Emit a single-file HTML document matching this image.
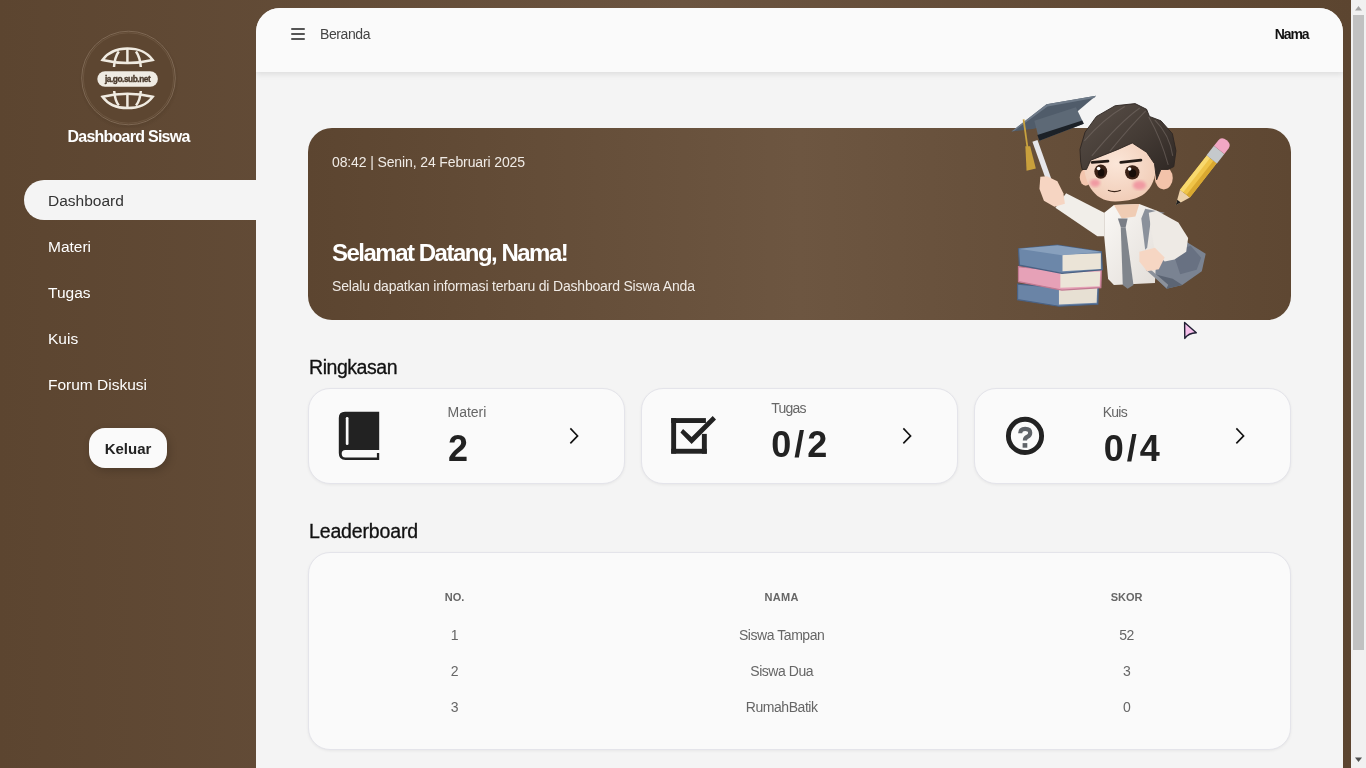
<!DOCTYPE html>
<html><head><meta charset="utf-8">
<style>
*{margin:0;padding:0;box-sizing:border-box}
html,body{width:1366px;height:768px;overflow:hidden}
body{position:relative;font-family:"Liberation Sans",sans-serif;background:linear-gradient(90deg,#5c4530 0%,#6b5440 50%,#5c4530 99%);}
.a{position:absolute;white-space:nowrap;line-height:1}
#sb{position:absolute;left:0;top:0;width:256px;height:768px}
#main{position:absolute;left:256px;top:8px;width:1087px;height:760px;background:#f4f4f4;border-radius:24px 24px 0 0;overflow:hidden}
#hdr{position:absolute;left:0;top:0;width:1087px;height:64px;background:#fafafa;box-shadow:0 2px 6px rgba(0,0,0,.10)}
#scroll{position:absolute;left:1351px;top:0;width:15px;height:768px;background:#f1f1f1}
.th{top:583.7px;width:200px;text-align:center;font-size:11px;font-weight:bold;color:#666}
.td{width:200px;text-align:center;font-size:14px;color:#666;letter-spacing:-0.45px}
.card{position:absolute;background:#fafafa;border:1px solid #e4e4ea;border-radius:22px;box-shadow:0 1px 3px rgba(0,0,0,.06)}
</style></head>
<body>
<div id="wrap" style="position:absolute;left:0;top:0;width:1366px;height:768px;will-change:transform">
<div id="sb">
  <svg class="a" style="left:78px;top:28px" width="100" height="100" viewBox="78 28 100 100">
    <defs><radialGradient id="lg" cx="50%" cy="50%" r="50%"><stop offset="85%" stop-color="#3a2a1a" stop-opacity=".25"/><stop offset="100%" stop-color="#3a2a1a" stop-opacity="0"/></radialGradient></defs>
    <circle cx="129" cy="80" r="50" fill="url(#lg)"/>
    <circle cx="128.5" cy="78" r="46.5" fill="#5d4631"/>
    <circle cx="128.5" cy="78" r="46.8" fill="none" stroke="#8e7864" stroke-width=".7"/>
    <circle cx="128.5" cy="78" r="45.2" fill="none" stroke="#7c6651" stroke-width=".5"/>
    <g fill="none" stroke="#f0ebe1" stroke-width="2.5" stroke-linecap="butt">
      <path d="M102.5,60 C109,51 117,48.6 127.4,48.6 C138,48.6 146,51 152.7,60 Q127.4,66 102.5,60 Z" stroke-linejoin="miter"/>
      <path d="M127.4,49 V63.2"/>
      <path d="M118.8,51.5 Q114.8,57 114,67"/>
      <path d="M136,51.5 Q140,57 140.8,67"/>
      <path d="M102.5,96.7 C109,105.7 117,108.1 127.4,108.1 C138,108.1 146,105.7 152.7,96.7 Q127.4,90.7 102.5,96.7 Z" stroke-linejoin="miter"/>
      <path d="M127.4,93.5 V107.8"/>
      <path d="M114.2,91 Q115,101 118.8,105.5"/>
      <path d="M140.8,91 Q140,101 136,105.5"/>
    </g>
    <rect x="97.3" y="71.3" width="60.6" height="15.5" rx="7.75" fill="#efebe3"/>
    <text x="127.6" y="82.2" text-anchor="middle" font-family="Liberation Sans" font-weight="bold" font-size="8.3" letter-spacing="-0.45" fill="#4a3a2c" stroke="#4a3a2c" stroke-width="0.35">ja.go.sub.net</text>
  </svg>
  <div class="a" id="title" style="left:0;width:256px;text-align:center;top:129px;font-size:16px;font-weight:bold;color:#fff;letter-spacing:-0.75px;padding-left:1px">Dashboard Siswa</div>
  <div class="a" style="left:24px;top:180px;width:232px;height:40px;background:#f4f4f4;border-radius:20px 0 0 20px"></div>
  <div class="a" style="left:48px;top:192.7px;font-size:15.5px;color:#333">Dashboard</div>
  <div class="a" style="left:48px;top:238.7px;font-size:15.5px;color:#fff">Materi</div>
  <div class="a" style="left:48px;top:284.7px;font-size:15.5px;color:#fff">Tugas</div>
  <div class="a" style="left:48px;top:330.7px;font-size:15.5px;color:#fff">Kuis</div>
  <div class="a" style="left:48px;top:376.7px;font-size:15.5px;color:#fff">Forum Diskusi</div>
  <div class="a" style="left:89px;top:428px;width:78px;height:40px;background:#fafafa;border-radius:16px;box-shadow:2px 3px 8px rgba(0,0,0,.18)"></div>
  <div class="a" style="left:89px;top:441px;width:78px;text-align:center;font-size:15px;font-weight:bold;color:#222">Keluar</div>
</div>

<div id="main">
  <div id="hdr">
    <div class="a" style="left:35px;top:20px;width:14px;height:2px;background:#555;border-radius:1px"></div>
    <div class="a" style="left:35px;top:25px;width:14px;height:2px;background:#555;border-radius:1px"></div>
    <div class="a" style="left:35px;top:30px;width:14px;height:2px;background:#555;border-radius:1px"></div>
    <div class="a" style="left:64px;top:19px;font-size:14px;color:#444;letter-spacing:-0.4px">Beranda</div>
    <div class="a" style="right:33.5px;top:19px;font-size:14px;font-weight:bold;color:#111;letter-spacing:-1.1px;padding-right:1px">Nama</div>
  </div>

  <div class="a" id="banner" style="left:52px;top:120px;width:983px;height:192px;border-radius:24px;background:linear-gradient(90deg,#5c4530 0%,#6d5641 50%,#5e4732 100%)"></div>
  <div class="a" style="left:76px;top:147.2px;font-size:14px;color:#f0ebe6;letter-spacing:-0.12px">08:42 | Senin, 24 Februari 2025</div>
  <div class="a" style="left:76px;top:233px;font-size:24px;font-weight:bold;color:#fff;letter-spacing:-1.5px">Selamat Datang, Nama!</div>
  <div class="a" style="left:76px;top:271.1px;font-size:14px;color:#f0ebe6;letter-spacing:-0.19px">Selalu dapatkan informasi terbaru di Dashboard Siswa Anda</div>

  <div class="a" style="left:53px;top:350.1px;font-size:19.5px;color:#111;letter-spacing:-0.45px;-webkit-text-stroke:0.3px #111">Ringkasan</div>

  <div class="card" style="left:52px;top:380px;width:317px;height:96px"></div>
  <div class="card" style="left:385px;top:380px;width:317px;height:96px"></div>
  <div class="card" style="left:718px;top:380px;width:317px;height:96px"></div>

  <div class="a" style="left:191.5px;top:397.1px;font-size:14px;color:#666">Materi</div>
  <div class="a" style="left:192px;top:423.2px;font-size:36px;font-weight:bold;color:#222">2</div>
  <div class="a" style="left:515.3px;top:392.9px;font-size:14px;color:#666;letter-spacing:-0.8px">Tugas</div>
  <div class="a" style="left:515.3px;top:419px;font-size:36px;font-weight:bold;color:#222;letter-spacing:3px">0/2</div>
  <div class="a" style="left:846.7px;top:396.8px;font-size:14px;color:#666;letter-spacing:-0.75px">Kuis</div>
  <div class="a" style="left:847.7px;top:423.2px;font-size:36px;font-weight:bold;color:#222;letter-spacing:3px">0/4</div>

  <div class="a" style="left:53px;top:513.5px;font-size:19.5px;color:#111;letter-spacing:-0.15px;-webkit-text-stroke:0.3px #111">Leaderboard</div>
  <div class="card" style="left:52px;top:543.5px;width:983px;height:198px"></div>

  <div class="a th" style="left:98.5px">NO.</div>
  <div class="a th" style="left:425.7px;letter-spacing:0.3px">NAMA</div>
  <div class="a th" style="left:770.6px">SKOR</div>
  <div class="a td" style="left:98.5px;top:620.35px">1</div>
  <div class="a td" style="left:425.7px;top:620.35px">Siswa Tampan</div>
  <div class="a td" style="left:770.6px;top:620.35px">52</div>
  <div class="a td" style="left:98.5px;top:656.15px">2</div>
  <div class="a td" style="left:425.7px;top:656.15px">Siswa Dua</div>
  <div class="a td" style="left:770.6px;top:656.15px">3</div>
  <div class="a td" style="left:98.5px;top:692.15px">3</div>
  <div class="a td" style="left:425.7px;top:692.15px">RumahBatik</div>
  <div class="a td" style="left:770.6px;top:692.15px">0</div>
</div>


<svg class="a" style="left:0;top:0" width="1366" height="768" viewBox="0 0 1366 768">

  <!-- illustration -->
  <defs>
    <linearGradient id="hairg" x1="0" y1="0" x2="1" y2="1"><stop offset="0" stop-color="#5a5049"/><stop offset=".55" stop-color="#433a34"/><stop offset="1" stop-color="#2c2522"/></linearGradient>
    <linearGradient id="shirtg" x1="0" y1="0" x2="1" y2="1"><stop offset="0" stop-color="#faf8f5"/><stop offset="1" stop-color="#e2ddd8"/></linearGradient>
    <radialGradient id="faceg" cx="45%" cy="40%" r="60%"><stop offset="0" stop-color="#fbe6d8"/><stop offset="1" stop-color="#f1cdb8"/></radialGradient>
    <filter id="blur2"><feGaussianBlur stdDeviation="6"/></filter>
  </defs>
  <g transform="translate(1005,90) scale(0.29948)">
    <!-- cap -->
    <polygon points="21.5,138.7 138.7,47.8 303.8,19.1 241.6,71.8 98,129" fill="#505c6a"/>
    <polygon points="21.5,138.7 138.7,47.8 303.8,19.1 298,27 142,55 30,137" fill="#6f7b89"/>
    <polygon points="98,102.9 236.8,57.4 263,112.4 114.8,169.8" fill="#5d6976"/>
    <polygon points="108,150 258,102 263,112.4 114.8,169.8" fill="#1c2127"/>
    <path d="M62,98 L75,192" stroke="#c9a23f" stroke-width="6" fill="none"/>
    <polygon points="68,188 84,188 103,262 72,270" fill="#c9a03c"/>
    <!-- books -->
    <polygon points="42,648 185,660 312,655 310,715 180,722 42,700" fill="#6a84a6" stroke="#4a6284" stroke-width="4"/>
    <polygon points="180,665 308,660 306,710 180,716" fill="#e7e0d3"/>
    <polygon points="45,590 190,605 322,600 320,660 190,668 45,640" fill="#e6a1b7" stroke="#c27a92" stroke-width="4"/>
    <polygon points="185,610 318,606 316,655 185,660" fill="#ece5d8"/>
    <polygon points="45,530 175,518 322,540 325,600 190,612 48,585" fill="#6c87a9" stroke="#4a6284" stroke-width="4"/>
    <polygon points="192,550 320,545 320,598 192,605" fill="#ebe4d7"/>
    <path d="M45,530 L175,518 L322,540 L190,552 Z" fill="#88a0bd"/>
    <!-- bag -->
    <polygon points="500.7,507.5 585.5,494.5 670.2,546.6 657.2,605.3 592,650.9 539.8,664 487.7,611.8" fill="#7a8392"/>
    <polygon points="560,540 620,520 655,560 640,600 585,615" fill="#687182"/>
    <polygon points="487.7,611.8 539.8,664 592,650.9 560,630 520,620" fill="#5c6574"/>
    <!-- torso -->
    <polygon points="331.2,409.7 363.8,383.6 448.6,380.4 507.2,403.2 520,480 505,560 500.7,644.4 363.8,650.9 344.3,631.4 331.2,488" fill="url(#shirtg)"/>
    <!-- raised arm sleeve -->
    <polygon points="168.2,393.4 204.1,344.5 331.2,409.7 331.2,488 308.4,488" fill="#f1eee9"/>
    <!-- neck -->
    <polygon points="363.8,383.6 448.6,380.4 435.5,422.8 389.9,429.3" fill="#f0ccb4"/>
    <!-- strap -->
    <polygon points="468.1,396.7 533.3,409.7 487.7,429.3 474.6,527.1 468.1,533.6 455.1,429.3" fill="#8b919b"/>
    <polygon points="470,600 482,596 545,650 539.8,662" fill="#8b919b"/>
    <!-- tie -->
    <polygon points="376.9,429.3 409.5,429.3 402.9,458.6 386.6,458.6" fill="#7a7e86"/>
    <polygon points="386.6,458.6 402.9,458.6 429,650.9 409.5,664 393.2,650.9" fill="#80858c"/>
    <!-- right arm -->
    <polygon points="480,410 507.2,403.2 578.9,442.3 611.5,494.5 605,540.1 565.9,566.2 533.3,572.7 500.7,540.1 490,480" fill="#eeeae5"/>
    <!-- hands -->
    <polygon points="448.6,540.1 500.7,527.1 533.3,559.7 513.7,598.8 474.6,605.3 448.6,572.7" fill="#f6d6c3"/>
    <path d="M100,170 L172,372" stroke="#e6e6ea" stroke-width="18" fill="none"/>
    <polygon points="118,290 140,288 175,305 195,345 200,380 165,390 130,370 115,330" fill="#f6d5c2"/>
    <!-- ears -->
    <ellipse cx="269.6" cy="291.7" rx="20" ry="28" fill="#f3c6ae"/>
    <ellipse cx="530.2" cy="294" rx="30" ry="38" fill="#f3c3aa"/>
    <!-- face -->
    <path d="M262,230 C262,300 290,372 368,372 C455,372 500,340 506,250 L500,190 L420,160 L320,190 Z" fill="url(#faceg)"/>
    <ellipse cx="300.7" cy="310.8" rx="17" ry="13" fill="#f09aa2" filter="url(#blur2)"/>
    <ellipse cx="448.9" cy="318" rx="22" ry="15" fill="#f09aa2" filter="url(#blur2)"/>
    <ellipse cx="319.8" cy="272.5" rx="21.5" ry="24" fill="#3b2216"/>
    <ellipse cx="425" cy="274.9" rx="24" ry="24" fill="#3b2216"/>
    <ellipse cx="321" cy="276" rx="11" ry="13" fill="#160d08"/>
    <ellipse cx="426" cy="278" rx="12" ry="13" fill="#160d08"/>
    <circle cx="312.6" cy="262" r="6" fill="#fff"/>
    <circle cx="416" cy="264" r="6" fill="#fff"/>
    <path d="M291,241.5 L343.7,237.6" stroke="#241b17" stroke-width="9.5" stroke-linecap="round"/>
    <path d="M386.7,241.5 L453.7,234.3" stroke="#241b17" stroke-width="9.5" stroke-linecap="round"/>
    <path d="M343.7,334.7 Q365.2,344 386.7,334.7" fill="none" stroke="#3a2418" stroke-width="4"/>
    <!-- hair -->
    <path d="M252.8,241.5 L250.4,198.4 L267.2,141 L305.4,88.4 L367.6,52.6 L434.5,45.4 L472.8,64.5 L482.4,88.4 L520.6,102.8 L558.9,145.8 L570.8,203.2 L563.7,255.8 L544.5,265.4 L520.6,265.4 L506.3,300 L499.1,246.2 L472.8,208 L425,176.9 L377.2,198.4 L329.3,217.5 L286.3,234.3 L272,265.4 L257.6,265.4 Z" fill="url(#hairg)" stroke="#2e2622" stroke-width="3" stroke-linejoin="round"/>
    <path d="M450,60 Q380,110 290,220 M470,70 Q420,120 350,205 M400,55 Q330,95 265,170 M480,90 Q520,160 545,250 M500,100 Q550,150 560,220" stroke="#7a706a" stroke-width="3.5" fill="none" opacity=".55"/>
    <!-- pencil -->
    <g transform="translate(570,385) rotate(-51.9)">
      <polygon points="0,0 50,-21 50,21" fill="#ecd1ab"/>
      <polygon points="0,0 18,-7.5 18,7.5" fill="#1f1f1f"/>
      <rect x="50" y="-21" width="145" height="42" fill="#efc448"/>
      <rect x="50" y="-21" width="145" height="14" fill="#f8d96e"/>
      <rect x="50" y="7" width="145" height="14" fill="#d9a830"/>
      <rect x="195" y="-22" width="40" height="44" fill="#c5c9cc"/>
      <path d="M235,-22 H258 Q276,-22 276,0 Q276,22 258,22 H235 Z" fill="#f1a7c4"/>
    </g>
  </g>
  <!-- cursor -->
  <path d="M1184.6,322.4 L1196.3,332.8 Q1188.5,333 1184.8,338.4 Z" fill="#f5c0ea" stroke="#1f1f33" stroke-width="1.4" stroke-linejoin="round"/>
  <!-- book icon -->
  <path fill="#222" d="M338.8,418 Q338.8,411.7 345,411.7 H379.2 V450.1 H345.3 Q341.7,450.1 341.7,453.75 Q341.7,457.4 345.3,457.4 H376.9 V452.9 H379.2 V460 H345.5 Q338.8,460 338.8,453 Z"/>
  <rect x="345.8" y="417" width="2.7" height="28.1" rx="1.3" fill="#fafafa"/>
  <!-- check icon -->
  <g fill="#222">
    <rect x="671.2" y="418.1" width="34.7" height="4.9"/>
    <rect x="671.2" y="418.1" width="4.9" height="35.5"/>
    <rect x="671.2" y="448.8" width="35.6" height="4.9"/>
    <rect x="701.9" y="433.9" width="4.9" height="19.8"/>
    <polygon points="683.06,429 691.62,436.9 712.71,416.08 716,419.38 691.62,444.02 680.42,432.55"/>
  </g>
  <!-- question icon -->
  <circle cx="1025" cy="435.9" r="16.6" fill="none" stroke="#222" stroke-width="4.9"/>
  <path d="M1020.2,433.3 Q1020.2,428.8 1025.2,428.8 Q1030.2,428.8 1030.2,432.8 Q1030.2,435.6 1027.4,436.8 Q1024.9,437.9 1024.9,440.6" fill="none" stroke="#5f6368" stroke-width="4.2"/>
  <rect x="1022.6" y="443.1" width="4.7" height="4.6" fill="#5f6368"/>
  <!-- chevrons -->
  <g fill="none" stroke="#111" stroke-width="1.6">
    <polyline points="570.35,428.4 577.6,435.9 570.35,443.4"/>
    <polyline points="903.35,428.4 910.6,435.9 903.35,443.4"/>
    <polyline points="1236.35,428.4 1243.6,435.9 1236.35,443.4"/>
  </g>
</svg>
<div id="scroll">
  <div class="a" style="left:2px;top:15px;width:11px;height:635px;background:#c1c1c1"></div>
  <svg class="a" style="left:0;top:0" width="15" height="768"><polygon points="4,10.5 11,10.5 7.5,6" fill="#a3a3a3"/><polygon points="4,757.5 11,757.5 7.5,762" fill="#505050"/></svg>
</div>
</div>
</body></html>
